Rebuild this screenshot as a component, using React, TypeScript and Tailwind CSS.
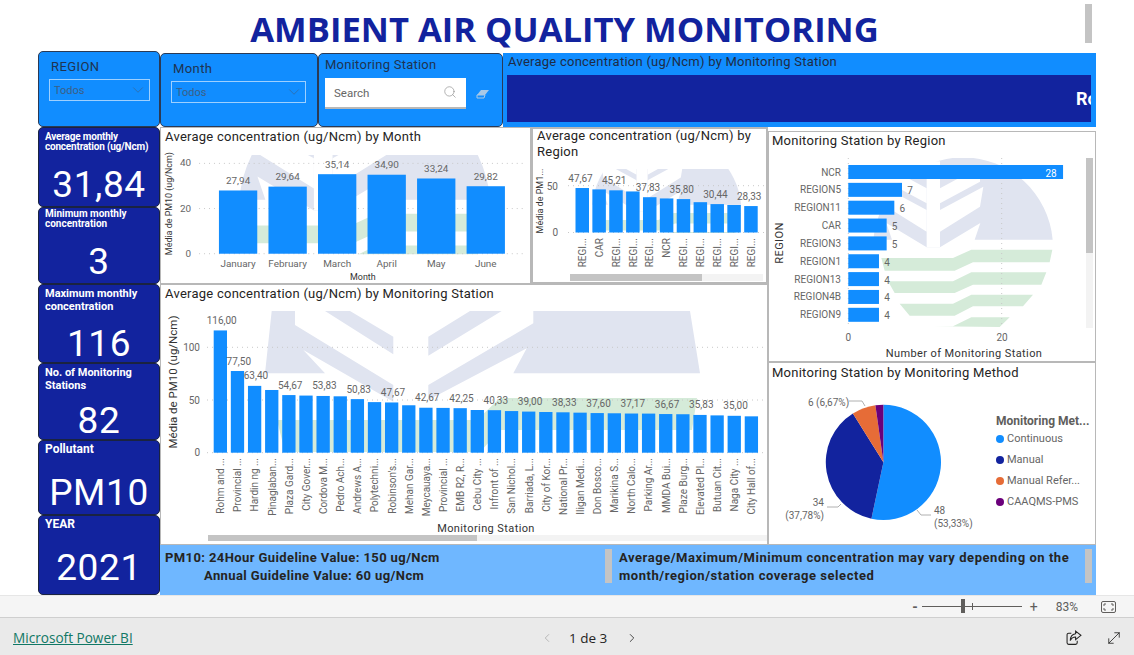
import { ChevronDown, ChevronLeft, ChevronRight, MoveDiagonal, Search } from 'lucide-react';
import type { ReactNode } from 'react';

const din = "font-['Roboto','Liberation_Sans',sans-serif]";

const monthData = [
  ['January', 27.94],
  ['February', 29.64],
  ['March', 35.14],
  ['April', 34.9],
  ['May', 33.24],
  ['June', 29.82],
] as const;

const regionBars = [47.67, 46.2, 45.21, 44, 37.83, 36.5, 35.8, 32.5, 30.44, 29.5, 28.33];
const regionTicks = ['REGI...', 'CAR', 'REGI...', 'REGI...', 'REGI...', 'NCR', 'REGI...', 'REGI...', 'REGI...', 'REGI...', 'REGI...'];

const stations: [string, number][] = [
  ['Rohm and ...', 116],
  ['Provincial ...', 77.5],
  ['Hardin ng ...', 63.4],
  ['Pinaglaban...', 59.5],
  ['Plaza Gard...', 54.67],
  ['City Gover...', 54.2],
  ['Cordova M...', 53.83],
  ['Pedro Ach...', 53.5],
  ['Andrews A...', 50.83],
  ['Polytechni...', 48],
  ["Robinson's...", 47.67],
  ['Mehan Gar...', 45],
  ['Meycauaya...', 42.67],
  ['Provincial ...', 42.5],
  ['EMB R2, R...', 42.25],
  ['Cebu City ...', 40.5],
  ['Infront of ...', 40.33],
  ['San Nichol...', 39.5],
  ['Barriada, L...', 39],
  ['City of Kor...', 38.6],
  ['National Pr...', 38.33],
  ['Iligan Medi...', 38],
  ['Don Bosco...', 37.6],
  ['Marikina S...', 37.4],
  ['North Calo...', 37.17],
  ['Parking Ar...', 37.1],
  ['MMDA Bui...', 36.67],
  ['Plaze Burg...', 36.5],
  ['Elevated Pl...', 35.83],
  ['Butuan Cit...', 35.4],
  ['Naga City ...', 35],
  ['City Hall of...', 34.5],
];

const byRegion: [string, number][] = [
  ['NCR', 28],
  ['REGION5', 7],
  ['REGION11', 6],
  ['CAR', 5],
  ['REGION3', 5],
  ['REGION1', 4],
  ['REGION13', 4],
  ['REGION4B', 4],
  ['REGION9', 4],
];

const pie = [
  { value: 48, fill: '#118dff' },
  { value: 34, fill: '#12239e' },
  { value: 6, fill: '#e66c37' },
  { value: 2, fill: '#6b007b' },
];

const legend = [
  { label: 'Continuous', dot: 'bg-[#118dff]' },
  { label: 'Manual', dot: 'bg-[#12239e]' },
  { label: 'Manual Refer...', dot: 'bg-[#e66c37]' },
  { label: 'CAAQMS-PMS', dot: 'bg-[#6b007b]' },
];

const fmt = (n: number) => n.toFixed(2).replace('.', ',');

function Label({ x, y, children, className = 'text-[10px] fill-[#666666]', anchor = 'middle', rotate }: {
  x: number;
  y: number;
  children: ReactNode;
  className?: string;
  anchor?: 'start' | 'middle' | 'end';
  rotate?: boolean;
}) {
  return (
    <text x={x} y={y} textAnchor={anchor} dominantBaseline="central" className={className} transform={rotate ? `rotate(-90 ${x} ${y})` : undefined}>
      {children}
    </text>
  );
}

// faded agency logo behind the charts: clip box in page px, logo origin and scale
function Watermark({ cx, cy, cw, ch, left, top, s }: { cx: number; cy: number; cw: number; ch: number; left: number; top: number; s: number }) {
  const k = 3 / s;
  return (
    <svg x={cx} y={cy} width={cw} height={ch} viewBox={`${(cx - left) * k} ${(cy - top) * k} ${cw * k} ${ch * k}`}>
      <path d="M1 245A270 270 0 0 1 539 245H305L322 195L201 268H161L40 195L57 245Z" className="fill-[#e0e4f0]" />
      <path d="M161 10H201V268H161Z" className="fill-white" />
      <path d="M201 91L321 26V71L201 136ZM201 156L331 86L321 146L201 221ZM161 91L41 26V71L161 136ZM161 156L31 86L41 146L161 221Z" className="fill-white" />
      <path
        d="M25 300H240L295 275H538L530 313H300L245 338H35ZM45 370H240L295 343H520L505 380H300L245 405H65ZM80 437H240L295 410H480L450 445H300L245 473H110ZM180 505H240L295 478H410L380 507Z"
        className="fill-[#d5ebd9]"
      />
    </svg>
  );
}

// the station chart shows only a stretched part of the same logo, drawn in page px
function StationWatermark() {
  return (
    <svg x={207} y={311} width={558} height={142} viewBox="207 311 558 142">
      <path
        d="M271.7 311H295V325L393.3 385V401.7L303.3 350L325 373.3H265ZM325 311H350L393.3 336.7V354.3ZM428.3 336.7L470 311H501.7L428.3 355.7ZM533.3 311H690L700 373.3H513.3L526.7 348.3L428.3 400V385L533.3 323.3Z"
        className="fill-[#e0e4f0]"
      />
      <path d="M277 420H477L500 398H697L692 430H500L480 452H285Z" className="fill-[#d5ebd9]" />
    </svg>
  );
}

function Gridline({ x1, x2, y }: { x1: number; x2: number; y: number }) {
  return <line x1={x1} x2={x2} y1={y} y2={y} strokeDasharray="1 4" className="stroke-[#c8c8c8]" />;
}

function Panel({ title, h, border = 'border', titleClass = 'h-[20px] pl-[4px] leading-[18px]', children }: {
  title: string;
  h: string;
  border?: string;
  titleClass?: string;
  children: ReactNode;
}) {
  return (
    <section className={`${h} ${border} flex flex-col overflow-hidden border-[#b8b8b8] bg-white`}>
      <h2 className={`${titleClass} shrink-0 text-[13px] tracking-[0.25px] text-[#252423]`}>{title}</h2>
      {children}
    </section>
  );
}

function MonthChart() {
  return (
    <svg width={369} height={136} viewBox="161 147 369 136" className="block">
      <Watermark cx={198} cy={154} cw={330} ch={100} left={238} top={84} s={1.41} />
      <Gridline x1={198} x2={527} y={162.5} />
      <Gridline x1={198} x2={527} y={208} />
      <Gridline x1={198} x2={527} y={253.5} />
      {[['40', 162], ['20', 208], ['0', 253]].map(([t, y]) => (
        <Label key={t} x={190} y={Number(y)} anchor="end" className="text-[10px] fill-[#666666]">{t}</Label>
      ))}
      <Label x={168} y={203} rotate className="text-[9px] fill-[#333333]">Média de PM10 (ug/Ncm)</Label>
      {monthData.map(([name, value], i) => {
        const x = 218 + i * 49.9;
        const h = value * 2.28;
        return (
          <g key={name}>
            <rect x={x} y={253.5 - h} width={38.6} height={h} className="fill-[#118dff]" />
            <Label x={x + 19.3} y={253.5 - h - 10}>{fmt(value)}</Label>
            <Label x={x + 19.3} y={263}>{name}</Label>
          </g>
        );
      })}
      <Label x={363} y={277} className="text-[9px] fill-[#333333]">Month</Label>
    </svg>
  );
}

function RegionChart() {
  return (
    <svg width={233} height={117} viewBox="533 165 233 117" className="block">
      <Watermark cx={566} cy={169} cw={198} ch={64} left={592} top={137} s={0.83} />
      <Gridline x1={568} x2={764} y={185.7} />
      <Gridline x1={568} x2={764} y={232.5} />
      <Label x={558} y={186} anchor="end">50</Label>
      <Label x={558} y={232} anchor="end">0</Label>
      <Label x={540} y={201} rotate className="text-[9px] fill-[#333333]">Média de PM1...</Label>
      {regionBars.map((value, i) => {
        const x = 575.5 + i * 16.87;
        const h = value * 0.933;
        return (
          <g key={i}>
            <rect x={x} y={232.5 - h} width={13.5} height={h} className="fill-[#118dff]" />
            {i % 2 === 0 && <Label x={x + 5} y={232.5 - h - 10}>{fmt(value)}</Label>}
            <Label x={x + 7} y={238} anchor="end" rotate>{regionTicks[i]}</Label>
          </g>
        );
      })}
      <rect x={570} y={274} width={193} height={7} className="fill-[#f3f3f3]" />
      <rect x={570} y={274} width={132} height={7} className="fill-[#c4c4c4]" />
    </svg>
  );
}

function StationChart() {
  return (
    <svg width={606} height={239} viewBox="161 305 606 239" className="block">
      <StationWatermark />
      <Gridline x1={207} x2={766} y={347.3} />
      <Gridline x1={207} x2={766} y={400} />
      <Gridline x1={207} x2={766} y={452.7} />
      {[['100', 347], ['50', 400], ['0', 452.7]].map(([t, y]) => (
        <Label key={t} x={200} y={Number(y)} anchor="end">{t}</Label>
      ))}
      <Label x={173} y={382} rotate className="text-[11.5px] fill-[#333333]">Média de PM10 (ug/Ncm)</Label>
      {stations.map(([name, value], i) => {
        const x = 213.7 + i * 17.13;
        const h = value * 1.054;
        const labelled = i < 3 || i % 2 === 0;
        return (
          <g key={i}>
            <rect x={x} y={452.7 - h} width={13.3} height={h} className="fill-[#118dff]" />
            {labelled && <Label x={x + 8} y={452.7 - h - 10}>{fmt(value)}</Label>}
            <Label x={x + 7} y={458} anchor="end" rotate className="text-[10px] fill-[#666666]">{name}</Label>
          </g>
        );
      })}
      <Label x={486} y={528} className="text-[11px] tracking-[0.4px] fill-[#333333]">Monitoring Station</Label>
      <rect x={208} y={535} width={559} height={6} className="fill-[#f3f3f3]" />
      <rect x={208} y={535} width={269} height={6} className="fill-[#c4c4c4]" />
    </svg>
  );
}

function ByRegionChart() {
  return (
    <svg width={326} height={211} viewBox="769 150 326 211" className="block">
      <Watermark cx={873} cy={158} cw={182} ch={170} left={873} top={158} s={1} />
      <line x1={848.3} x2={848.3} y1={158} y2={328} strokeDasharray="1 4" className="stroke-[#c8c8c8]" />
      <line x1={1001.7} x2={1001.7} y1={158} y2={328} strokeDasharray="1 4" className="stroke-[#c8c8c8]" />
      <Label x={779} y={243} rotate className="text-[11px] tracking-[0.4px] fill-[#333333]">REGION</Label>
      {byRegion.map(([name, value], i) => {
        const y = 165 + i * 17.85;
        const w = value * 7.67;
        return (
          <g key={name}>
            <rect x={848.3} y={y} width={w} height={14} className="fill-[#118dff]" />
            <Label x={841} y={y + 7} anchor="end">{name}</Label>
            {i === 0 ? (
              <Label x={1051} y={y + 8} className="text-[10px] fill-white">{value}</Label>
            ) : (
              <Label x={848.3 + w + 8} y={y + 8}>{value}</Label>
            )}
          </g>
        );
      })}
      <Label x={848.3} y={337}>0</Label>
      <Label x={1002} y={337}>20</Label>
      <Label x={964} y={353} className="text-[11px] tracking-[0.4px] fill-[#333333]">Number of Monitoring Station</Label>
      <rect x={1086} y={158} width={7} height={170} className="fill-[#f3f3f3]" />
      <rect x={1086} y={158} width={7} height={95} className="fill-[#c4c4c4]" />
    </svg>
  );
}

function pieSlices() {
  const total = pie.reduce((sum, s) => sum + s.value, 0);
  const cx = 883.4;
  const cy = 462.3;
  const r = 57.6;
  let angle = 0;
  return pie.map((s) => {
    const start = angle;
    angle += (s.value / total) * Math.PI * 2;
    const large = angle - start > Math.PI ? 1 : 0;
    const d = `M${cx} ${cy}L${cx + r * Math.sin(start)} ${cy - r * Math.cos(start)}A${r} ${r} 0 ${large} 1 ${cx + r * Math.sin(angle)} ${cy - r * Math.cos(angle)}Z`;
    return <path key={s.fill} d={d} fill={s.fill} />;
  });
}

function MethodChart() {
  return (
    <div className="flex">
      <svg width={226} height={161} viewBox="769 383 226 161" className="block shrink-0">
        {pieSlices()}
        <path d="M849 401H862L865 406M827 507H838L841 504M917 510L921 515H931" fill="none" className="stroke-[#b0b0b0]" />
        <Label x={808} y={402} anchor="start">6 (6,67%)</Label>
        <Label x={824} y={502} anchor="end">34</Label>
        <Label x={824} y={515} anchor="end">(37,78%)</Label>
        <Label x={934} y={510} anchor="start">48</Label>
        <Label x={934} y={523} anchor="start">(53,33%)</Label>
      </svg>
      <div className="flex-1 pt-[30px] pl-[1px]">
        <p className="h-[17px] text-[12px] leading-[16px] font-bold whitespace-nowrap text-[#605e5c]">Monitoring Met...</p>
        <ul className="flex flex-col gap-[7px] pt-[2px]">
          {legend.map((item) => (
            <li key={item.label} className="flex h-[14px] items-center gap-[3px] text-[11px] whitespace-nowrap text-[#666666]">
              <span className={`h-[8px] w-[8px] rounded-full ${item.dot}`} />
              {item.label}
            </li>
          ))}
        </ul>
      </div>
    </div>
  );
}

function Card({ title, value, h, pad, gap, size }: { title: string[]; value: string; h: string; pad: string; gap: string; size: string }) {
  return (
    <div className={`${h} ${pad} rounded-[5px] border border-[#1a2340] bg-[#12239e] pl-[6px] text-white`}>
      <div className={`${gap} ${size} font-bold`}>
        {title.map((line) => (
          <div key={line} className="whitespace-nowrap">{line}</div>
        ))}
      </div>
      <div className="pr-[6px] text-center text-[37px] leading-[40px] tracking-[0.6px]">{value}</div>
    </div>
  );
}

function Dropdown({ width }: { width: string }) {
  return (
    <div className={`${width} flex h-[22px] items-center justify-between border border-[#9ed0ff] pt-[3px] pr-[2px] pl-[4px] text-[11px] text-[#3c5f85]`}>
      Todos
      <ChevronDown size={18} strokeWidth={0.8} className="-mt-[4px] text-[#3c5f85]" />
    </div>
  );
}

export default function App() {
  return (
    <div className={`${din} flex h-[655px] w-[1134px] flex-col overflow-hidden bg-white text-[#252423]`}>
      <div className="flex h-[595px] flex-col pl-[38px]">
        <header className="flex h-[51px] shrink-0">
          <h1 className="flex-1 pt-[7px] pl-[6px] text-center font-['Open_Sans',sans-serif] text-[34.6px] leading-[44px] font-bold text-[#12239e]">AMBIENT AIR QUALITY MONITORING</h1>
          <div className="mt-[4px] mr-[42px] h-[39px] w-[7px] bg-[#c4c4c4]" />
        </header>

        <div className="flex flex-1">
          <aside className="flex w-[122px] shrink-0 flex-col">
            <div className="h-[76px] rounded-[5px] border border-[#2b3a55] bg-[#118dff] pt-[6px] pl-[10px]">
              <div className="h-[21px] pl-[2px] text-[13px] leading-[18px] tracking-[0.4px] text-[#1f3350]">REGION</div>
              <Dropdown width="w-[101px]" />
            </div>
            <Card h="h-[80px]" pad="pt-[4px]" gap="leading-[10px] mb-[13px]" size="text-[10px] tracking-[-0.2px]" title={['Average monthly', 'concentration (ug/Ncm)']} value="31,84" />
            <Card h="h-[77px]" pad="pt-[1px]" gap="leading-[10px] mb-[13px]" size="text-[10px]" title={['Minimum monthly', 'concentration']} value="3" />
            <Card h="h-[79px]" pad="pt-[2px]" gap="leading-[13px] mb-[11px]" size="text-[11px]" title={['Maximum monthly', 'concentration']} value="116" />
            <Card h="h-[77px]" pad="pt-[2px]" gap="leading-[13px] mb-[9px]" size="text-[11px]" title={['No. of Monitoring', 'Stations']} value="82" />
            <Card h="h-[75px]" pad="pt-[1px]" gap="leading-[15px] mb-[16px]" size="text-[12px]" title={['Pollutant']} value="PM10" />
            <Card h="h-[80px]" pad="pt-[1px]" gap="leading-[15px] mb-[16px]" size="text-[12px]" title={['YEAR']} value="2021" />
          </aside>

          <main className="flex w-[936px] shrink-0 flex-col pt-[2px]">
            <div className="flex h-[74px] shrink-0">
              <div className="w-[158px] rounded-[5px] border border-[#2b3a55] bg-[#118dff] pt-[6px] pl-[10px]">
                <div className="h-[21px] pl-[2px] text-[13px] leading-[18px] tracking-[0.4px] text-[#1f3350]">Month</div>
                <Dropdown width="w-[135px]" />
              </div>
              <div className="w-[185px] rounded-[5px] border border-[#2b3a55] bg-[#118dff] pt-[2px] pl-[6px]">
                <div className="h-[22px] text-[13px] leading-[18px] tracking-[0.25px] text-[#1f3350]">Monitoring Station</div>
                <div className="flex items-center">
                  <div className="flex h-[31px] w-[141px] items-center justify-between border-b-2 border-[#b8b8b8] bg-white pt-[2px] pr-[9px] pl-[9px] text-[11.5px] text-[#666666]">
                    Search
                    <Search size={14} strokeWidth={1.1} className="-mt-[3px] text-[#8a8a8a]" />
                  </div>
                  <svg width={14} height={10} viewBox="0 0 14 10" className="ml-[10px]">
                    <path d="M5 1H13L9 6H1Z" fill="#a9c8e6" />
                    <path d="M1 6H9L8 9H1Z" fill="none" stroke="#a9c8e6" />
                  </svg>
                </div>
              </div>
              <div className="flex w-[593px] flex-col bg-[#118dff] pr-[5px] pb-[5px] pl-[4px]">
                <div className="h-[22px] pt-[1px] pl-[1px] text-[13px] leading-[16px] tracking-[0.25px] text-[#1f2b45]">Average concentration (ug/Ncm) by Monitoring Station</div>
                <div className="flex flex-1 items-center justify-end overflow-hidden bg-[#12239e]">
                  <span className="w-[15px] overflow-hidden text-[18px] font-bold text-white">Ro</span>
                </div>
              </div>
            </div>

            <div className="flex h-[418px] shrink-0">
              <div className="flex w-[608px] flex-col">
                <div className="flex h-[157px]">
                  <div className="w-[371px]">
                    <Panel title="Average concentration (ug/Ncm) by Month" h="h-[157px]">
                      <MonthChart />
                    </Panel>
                  </div>
                  <div className="w-[237px]">
                    <Panel title="Average concentration (ug/Ncm) by Region" h="h-[157px]" border="border-2" titleClass="h-[36px] pl-[4px] leading-[16px] -mt-[1px] mb-[1px]">
                      <RegionChart />
                    </Panel>
                  </div>
                </div>
                <Panel title="Average concentration (ug/Ncm) by Monitoring Station" h="h-[261px]">
                  <StationChart />
                </Panel>
              </div>
              <div className="flex w-[328px] flex-col pt-[4px]">
                <Panel title="Monitoring Station by Region" h="h-[231px]" titleClass="h-[18px] pl-[3px] leading-[18px]">
                  <ByRegionChart />
                </Panel>
                <Panel title="Monitoring Station by Monitoring Method" h="h-[183px]" titleClass="h-[20px] pl-[3px] leading-[20px]">
                  <MethodChart />
                </Panel>
              </div>
            </div>

            <div className="flex h-[50px] bg-[#6fb7ff] pt-[4px] text-[13px] leading-[18px] font-bold tracking-[0.4px] text-[#252423]">
              <div className="w-[445px] pl-[5px]">
                <div>PM10: 24Hour Guideline Value: 150 ug/Ncm</div>
                <div className="pl-[39px]">Annual Guideline Value: 60 ug/Ncm</div>
              </div>
              <div className="h-[34px] w-[7px] bg-[#c4c4c4]" />
              <div className="w-[473px] pl-[7px] tracking-[0.55px]">Average/Maximum/Minimum concentration may vary depending on the month/region/station coverage selected</div>
              <div className="h-[34px] w-[7px] bg-[#c4c4c4]" />
            </div>
          </main>
        </div>
      </div>

      <div className="flex h-[23px] items-center justify-end border-y border-[#cfcfcf] border-t-[#e6e6e6] bg-[#f5f5f5] pr-[18px] text-[#605e5c]">
        <span className="text-[14px] leading-none font-bold">-</span>
        <div className="relative mr-[8px] ml-[4px] h-[1px] w-[100px] bg-[#605e5c]">
          <span className="absolute top-[-7px] left-[39px] h-[14px] w-[4px] bg-[#605e5c]" />
          <span className="absolute top-[-3px] left-[50px] h-[7px] w-[1px] bg-[#605e5c]" />
        </div>
        <span className="text-[14px] leading-none">+</span>
        <span className="ml-[18px] text-[12px]">83%</span>
        <svg width={15} height={12} viewBox="0 0 15 12" fill="none" stroke="#605e5c" className="ml-[23px]">
          <rect x="0.5" y="0.5" width="14" height="11" rx="1.5" />
          <path d="M3 5V3H5M10 3H12V5M12 7V9H10M5 9H3V7" />
        </svg>
      </div>

      <footer className="relative flex flex-1 items-center bg-[#eaeaea] pt-[3px] pr-[11px] pl-[13px]">
        <a className="font-['Open_Sans',sans-serif] text-[13.6px] text-[#117865] underline">Microsoft Power BI</a>
        <div className="absolute left-[540px] flex items-center font-['Open_Sans',sans-serif] text-[13.5px] font-medium text-[#252423]">
          <ChevronLeft size={14} strokeWidth={1.5} className="text-[#b0b0b0]" />
          <span className="mx-[15px]">1 de 3</span>
          <ChevronRight size={14} strokeWidth={1.5} className="ml-[3px] text-[#333333]" />
        </div>
        <svg width={16} height={16} viewBox="0 0 15 15" fill="none" stroke="#252423" className="mr-[23px] ml-auto">
          <path d="M5 3H2.5A1.5 1.5 0 0 0 1 4.5V12A1.5 1.5 0 0 0 2.5 13.5H9A1.5 1.5 0 0 0 10.5 12V10" />
          <path d="M9 1L14 5L9 9V6.5C6.5 6.5 5 7.5 4 10C4 6.5 6 4 9 3.5Z" />
        </svg>
        <MoveDiagonal size={18} strokeWidth={1.1} className="text-[#252423]" />
      </footer>
    </div>
  );
}
